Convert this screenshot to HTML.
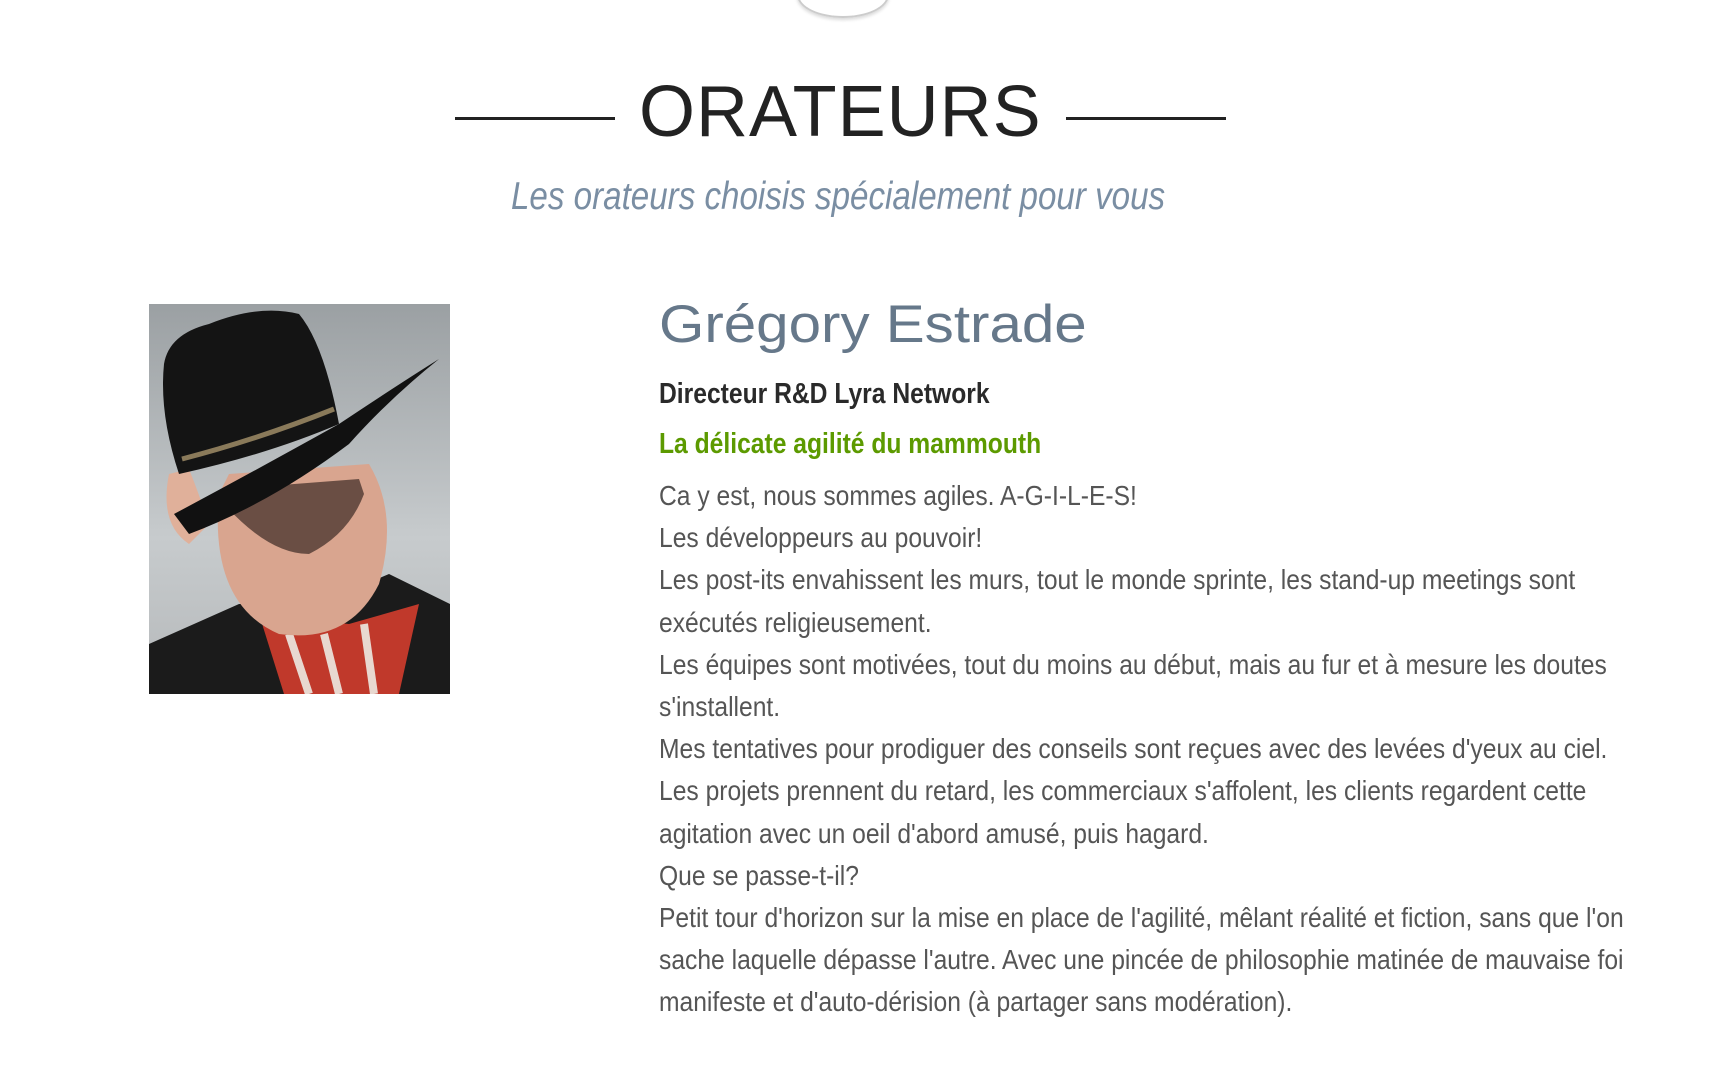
<!DOCTYPE html>
<html><head><meta charset="utf-8"><style>
html,body{margin:0;padding:0;background:#fff;width:1718px;height:1074px;overflow:hidden;position:relative}
.n{font-family:"Liberation Sans",sans-serif;transform-origin:0 0}
.abs{position:absolute;white-space:nowrap}
.line{position:absolute;height:3px;background:#222;top:117px}
</style></head><body>
<div class="abs" style="left:797px;top:-28px;width:88px;height:44px;border-radius:50%;border:2px solid #ccc;border-top:none;box-shadow:0 2px 3px rgba(0,0,0,.15)"></div>
<div class="line" style="left:455px;width:160px"></div>
<div class="line" style="left:1066px;width:160px"></div>
<div class="abs" style="left:639px;top:70px;font-family:'Liberation Sans',sans-serif;font-size:72px;color:#222;letter-spacing:1px;line-height:84px">ORATEURS</div>
<div class="abs n" style="left:511px;top:174px;font-size:39px;font-style:italic;color:#7a8ea3;line-height:46px;transform:scaleX(0.85)">Les orateurs choisis spécialement pour vous</div>
<svg class="abs" style="left:149px;top:304px" width="301" height="390" viewBox="0 0 301 390">
<defs><linearGradient id="bg" x1="0" y1="0" x2="0" y2="1"><stop offset="0" stop-color="#9ba0a3"/><stop offset=".6" stop-color="#c7cbcd"/><stop offset="1" stop-color="#b5b8ba"/></linearGradient></defs>
<rect width="301" height="390" fill="url(#bg)"/>
<path d="M0 340 L90 300 L170 300 L240 270 L301 300 L301 390 L0 390Z" fill="#1b1b1b"/>
<path d="M110 310 L135 390 L250 390 L270 300 L200 320Z" fill="#c0392b"/>
<path d="M140 330 L160 390 M175 330 L190 390 M215 320 L225 390" stroke="#e8d8d0" stroke-width="8"/>
<path d="M70 190 Q60 300 130 330 Q200 340 230 280 Q250 210 220 160 L80 170Z" fill="#d9a58f"/>
<path d="M75 200 Q120 250 160 250 Q200 230 215 190 L210 175 L80 185Z" fill="#3a2a24" opacity=".7"/>
<path d="M20 170 Q10 220 40 240 L60 220 Q50 190 40 165Z" fill="#e0b09a"/>
<path d="M25 210 Q100 170 190 120 Q250 80 290 55 Q240 95 200 140 Q120 200 40 230Z" fill="#111"/>
<path d="M15 60 Q20 30 60 20 Q110 0 150 10 Q175 40 190 120 Q120 150 30 170 Q10 110 15 60Z" fill="#141414"/>
<path d="M33 155 Q110 135 185 105" stroke="#8a7a5a" stroke-width="5" fill="none"/>
</svg>
<div class="abs n" style="left:659px;top:292px;font-size:53px;color:#66788a;line-height:66px;transform:scaleX(1.1)">Grégory Estrade</div>
<div class="abs n" style="left:659px;top:376px;font-size:29px;font-weight:bold;color:#2a2a2a;line-height:36px;transform:scaleX(0.85)">Directeur R&amp;D Lyra Network</div>
<div class="abs n" style="left:659px;top:426px;font-size:29px;font-weight:bold;color:#5c9a00;line-height:36px;transform:scaleX(0.85)">La délicate agilité du mammouth</div>
<div class="abs n" style="left:659px;top:475px;font-size:28px;color:#555;line-height:42.2px;transform:scaleX(0.88)">Ca y est, nous sommes agiles. A-G-I-L-E-S!<br>Les développeurs au pouvoir!<br>Les post-its envahissent les murs, tout le monde sprinte, les stand-up meetings sont<br>exécutés religieusement.<br>Les équipes sont motivées, tout du moins au début, mais au fur et à mesure les doutes<br>s'installent.<br>Mes tentatives pour prodiguer des conseils sont reçues avec des levées d'yeux au ciel.<br>Les projets prennent du retard, les commerciaux s'affolent, les clients regardent cette<br>agitation avec un oeil d'abord amusé, puis hagard.<br>Que se passe-t-il?<br>Petit tour d'horizon sur la mise en place de l'agilité, mêlant réalité et fiction, sans que l'on<br>sache laquelle dépasse l'autre. Avec une pincée de philosophie matinée de mauvaise foi<br>manifeste et d'auto-dérision (à partager sans modération).</div>
</body></html>
